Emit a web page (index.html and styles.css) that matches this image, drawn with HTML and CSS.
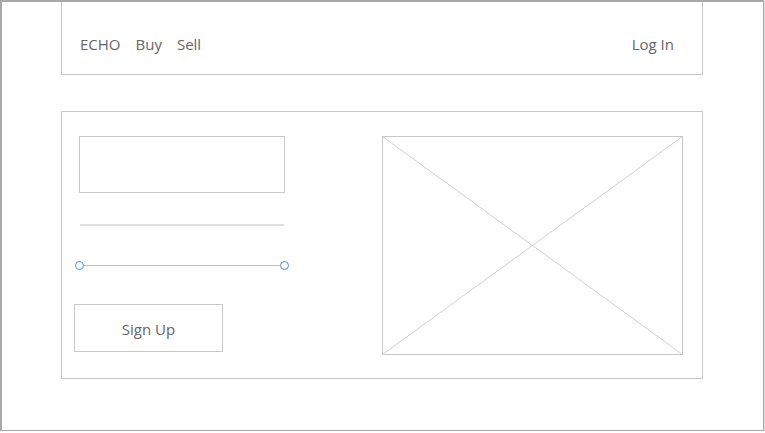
FILE: index.html
```html
<!DOCTYPE html>
<html>
<head>
<meta charset="utf-8">
<link rel="stylesheet" href="styles.css">
</head>
<body>
<div class="frame">
  <header class="nav">
    <div class="nav-left">
      <span class="nav-item">ECHO</span>
      <span class="nav-item">Buy</span>
      <span class="nav-item">Sell</span>
    </div>
    <span class="nav-item login">Log In</span>
  </header>
  <main class="panel">
    <div class="form">
      <div class="input"></div>
      <div class="divider"></div>
      <div class="slider">
        <span class="knob"></span>
        <span class="track"></span>
        <span class="knob"></span>
      </div>
      <button class="btn">Sign Up</button>
    </div>
    <div class="image">
      <svg width="301" height="219" viewBox="0 0 301 219" preserveAspectRatio="none">
        <rect x="0.5" y="0.5" width="300" height="218" fill="none" stroke="#c8c8c8" stroke-width="1"/>
        <line x1="0.5" y1="0.5" x2="300.5" y2="218.5" stroke="#cfcfcf" stroke-width="1"/>
        <line x1="300.5" y1="0.5" x2="0.5" y2="218.5" stroke="#cfcfcf" stroke-width="1"/>
      </svg>
    </div>
  </main>
</div>
</body>
</html>
```
FILE: styles.css
```css
html, body {
  margin: 0;
  padding: 0;
  background: #ffffff;
}
body {
  font-family: "Open Sans", "Noto Sans", sans-serif;
  color: #666666;
}
.frame {
  box-sizing: border-box;
  width: 764px;
  height: 431px;
  border: 1px solid #a8a8a8;
  border-top-width: 2px;
  border-left-width: 2px;
  box-shadow: 1px 1px 0 #e0e0e0;
  padding-left: 59px;
}
.nav {
  box-sizing: border-box;
  width: 642px;
  height: 73px;
  border: 1px solid #c8c8c8;
  border-top: none;
  display: flex;
  align-items: center;
  justify-content: space-between;
  padding: 0 28px 0 18px;
}
.nav-left {
  display: flex;
  gap: 15px;
}
.nav-item {
  font-size: 15px;
  line-height: 20px;
  padding-top: 11px;
}
.panel {
  box-sizing: border-box;
  width: 642px;
  height: 268px;
  margin-top: 36px;
  border: 1px solid #c8c8c8;
  display: flex;
  justify-content: space-between;
  padding: 24px 19px 0 12px;
}
.form {
  display: flex;
  flex-direction: column;
  width: 220px;
}
.input {
  box-sizing: border-box;
  width: 206px;
  height: 57px;
  margin-left: 5px;
  border: 1px solid #c8c8c8;
}
.divider {
  width: 204px;
  height: 2px;
  margin-left: 6px;
  margin-top: 31px;
  background: #e0e0e0;
}
.slider {
  display: flex;
  align-items: center;
  margin-top: 35px;
  margin-left: 1px;
  width: 214px;
}
.knob {
  box-sizing: border-box;
  width: 9px;
  height: 9px;
  border: 1.5px solid #4a8fe8;
  border-radius: 50%;
  background: #fff;
}
.track {
  flex: 1;
  height: 1px;
  background: #bdbdbd;
}
.btn {
  box-sizing: border-box;
  width: 149px;
  height: 48px;
  margin-top: 34px;
  border: 1px solid #c8c8c8;
  background: #fff;
  font-family: "Open Sans", "Noto Sans", sans-serif;
  font-size: 15px;
  color: #666666;
  padding: 1px 0 0 0;
}
.image {
  width: 301px;
  height: 219px;
}
.image svg {
  display: block;
}
```
